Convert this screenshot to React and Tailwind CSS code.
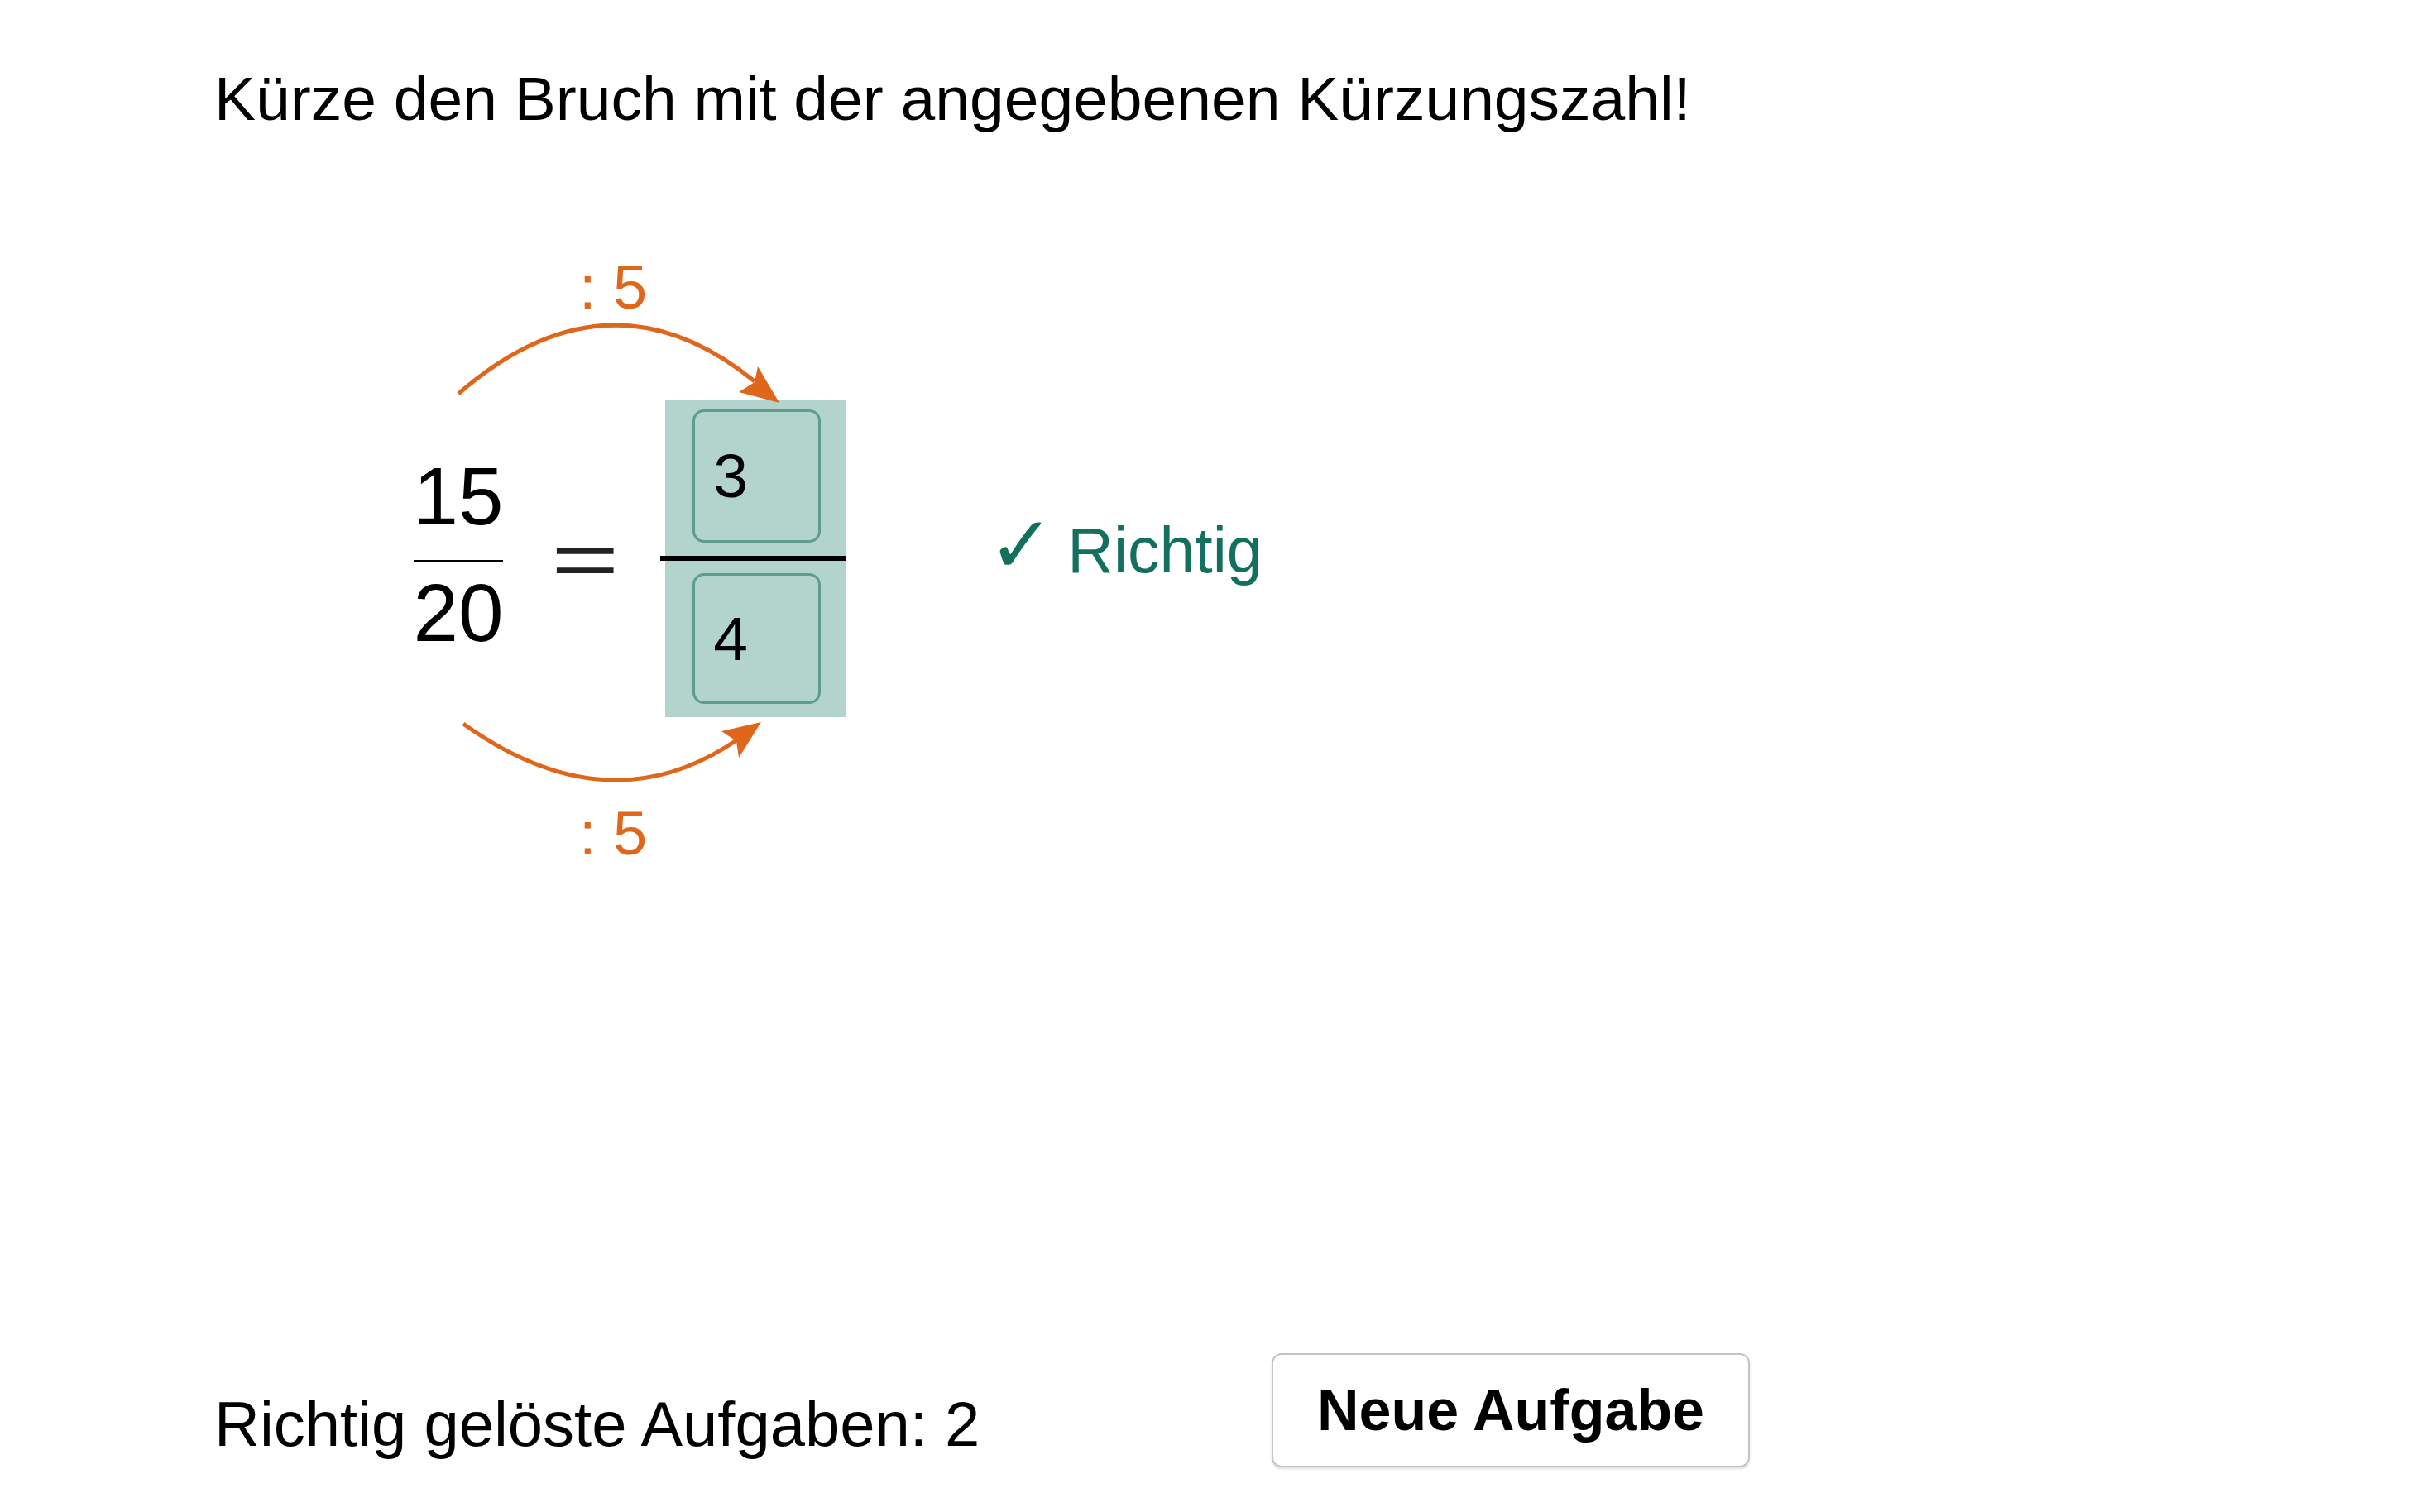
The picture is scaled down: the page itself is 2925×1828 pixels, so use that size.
import React from 'react';

const ORANGE = '#e0661c';

function Arrows() {
  // arcs drawn in page coordinates through the viewBox
  return (
    <svg
      className="absolute left-[241px] top-[-184px] w-[560px] h-[760px] pointer-events-none"
      viewBox="500 300 560 760"
      fill="none"
    >
      <path d="M554 476 Q736 318 912 461" stroke={ORANGE} strokeWidth="5" />
      <polygon points="942,487 893,474 912,462 916,443" fill={ORANGE} />
      <path d="M560 875 Q737 1001.5 893 893" stroke={ORANGE} strokeWidth="5" />
      <polygon points="920,873 893,916 890,896 872,884" fill={ORANGE} />
    </svg>
  );
}

function AnswerInput({ value, tall }) {
  return (
    <div
      className={`w-[155px] ${tall ? 'h-[161px]' : 'h-[158px]'} rounded-[14px] border-[3px] border-[#5c9d8f] flex items-center pl-[22px] text-[75px] leading-none text-black`}
    >
      {value}
    </div>
  );
}

export default function App() {
  return (
    <div className="min-h-screen bg-white font-['Liberation_Sans','DejaVu_Sans',sans-serif] text-black pl-[259px] pt-[82px]">
      <h1 className="text-[75px] leading-none font-normal">Kürze den Bruch mit der angegebenen Kürzungszahl!</h1>

      {/* exercise */}
      <div className="relative mt-[327px]">
        <Arrows />
        <span className="absolute left-[441px] top-[-173px] text-[74px] leading-none whitespace-pre text-[#e0661c]">: 5</span>
        <span className="absolute left-[441px] top-[487px] text-[74px] leading-none whitespace-pre text-[#e0661c]">: 5</span>

        <div className="flex items-start ml-[241px]">
          <div className="mt-[67px] w-[108px] flex flex-col items-center">
            <span className="text-[98px] leading-none">15</span>
            <div className="mt-[28px] h-[3px] w-full bg-black" />
            <span className="mt-[12px] text-[98px] leading-none">20</span>
          </div>

          <span className="ml-[72px] mt-[147px] text-[93px] leading-none scale-x-[1.52] text-[#222]">=</span>

          <div className="ml-[70px] w-[218px] h-[383px] bg-[#b3d3cd] flex flex-col pl-[33px] pt-[11px]">
            <AnswerInput value="3" tall />
            <div className="h-[37px] flex items-center">
              <div className="-ml-[39px] w-[228px] h-[6px] bg-black" />
            </div>
            <AnswerInput value="4" />
          </div>

          <div className="ml-[172px] mt-[127px] flex items-baseline text-[77px] leading-none text-[#13705f]">
            <span className="w-[96px] font-['DejaVu_Sans',sans-serif] text-[96px]">✓</span>
            <span>Richtig</span>
          </div>
        </div>
      </div>

      {/* footer */}
      <div className="mt-[769px] flex items-start">
        <span className="w-[1278px] mt-[48px] text-[76px] leading-none">Richtig gelöste Aufgaben: 2</span>
        <button className="w-[578px] h-[138px] rounded-[12px] border-2 border-[#c4c4c4] bg-white shadow-[0_2px_3px_rgba(0,0,0,0.12)] flex items-center justify-center text-[70px] leading-none font-bold text-black">
          Neue Aufgabe
        </button>
      </div>
    </div>
  );
}
